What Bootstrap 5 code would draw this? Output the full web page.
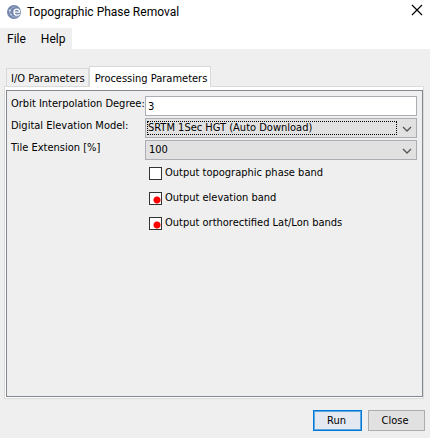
<!DOCTYPE html>
<html lang="en">
<head>
<meta charset="utf-8">
<meta name="viewport" content="width=device-width, initial-scale=1">
<title>Topographic Phase Removal</title>
<link href="https://cdn.jsdelivr.net/npm/bootstrap@5.3.0/dist/css/bootstrap.min.css" rel="stylesheet">
<style>
body{background:#efefef;color:#000;font:11px/14px "DejaVu Sans Condensed","Liberation Sans",sans-serif}
.titlebar{height:28px;padding:0 6px;background:#fff}
.titlebar h1{font:12px/16px Roboto,"Open Sans",sans-serif;padding-left:5px}
.titlebar h1,.titlebar svg{margin-top:-4px}
.win-close{width:14px;height:14px}
.menubar{height:21px;background:#fff}
.menu-items{background:#efefef;padding:0 7px;gap:15px}
.menu-items button{font:12px/20px Roboto,"Open Sans",sans-serif;color:#000}
.dialog-main{padding:17px 6px 0 4px}
.tabs{padding-left:2px}
.tabs .nav-link{font-size:11px;line-height:14px;color:#000;background:#f0f0f0;border:1px solid #d9d9d9;border-bottom:0;border-radius:0;padding:3px 3px 0 4px;height:18px;white-space:nowrap}
.tabs .nav-link.active{background:#fff;height:21px;padding:3px 3px 0 5px;margin-bottom:-1px;z-index:1;position:relative}
.pane{border:1px solid #d9dcd9;background:#fff;padding:3px 0 1px 1px}
.pane-body{border:1px solid #828790;background:#efefef;padding:5px 5px 0 4px}
.form-grid{display:grid;grid-template-columns:134px 1fr;row-gap:2px}
.form-grid label.caption{white-space:nowrap;line-height:16px}
.field{height:20px;min-height:0;border:1px solid #abadb3;border-radius:0;font-size:11px;line-height:14px;padding:2px;color:#000;background-color:#fff}
.combo{display:grid;grid-template-columns:1fr 20px;align-items:center}
.combo>*{grid-row:1}
.combo select{grid-column:1/3;background:#e1e1e1;appearance:none}
.combo .roomy{padding-left:3px}
.combo svg{grid-column:2;pointer-events:none;width:10px;height:6px;margin:2px 0 0 5px;z-index:1}
.combo .focus-mark{grid-column:1;height:14px;border:1px dotted #000;margin:0 0 0 2px;pointer-events:none;z-index:1}
.checks{padding:6px 0 0 138px;gap:11px}
.checks label{gap:3px;height:14px;white-space:nowrap}
.tick{appearance:none;width:13px;height:13px;margin:0;border:1px solid #333;background:#fff;flex:none}
.tick:checked{background:radial-gradient(circle at 7px 7px,red 3px,#fff 4px) padding-box}
.actions{padding:11px 5px 7px;gap:6px}
.action{font-size:11px;line-height:15px;height:21px;width:57px;padding:0 3px 0 0;border:1px solid #adadad;border-radius:0;background:#e1e1e1;color:#000}
.action.default{width:49px;padding:0 2px 0 0;border:1px solid #0078d7;box-shadow:inset 0 0 0 1px #5ba7e3;background:#e3e8f1}
</style>
</head>
<body>
<div class="d-flex flex-column min-vh-100">
<header>
<div class="titlebar d-flex align-items-center">
<svg width="16" height="16" viewBox="0 0 16 16" aria-hidden="true"><circle cx="8" cy="8" r="7" fill="#7487ad"/><path d="M9 3a5 5 0 1 0 3.800 8.200" fill="none" stroke="#a9b5cf" stroke-width="1"/><path d="M8.200 8.200h5.400c0-2-1-3-2.700-3S8 6.400 8 8.200s1.200 3 2.900 3c1.200 0 2-.4 2.700-1.100" fill="none" stroke="#fff" stroke-width="1.300"/><circle cx="3.800" cy="6.500" r="1" fill="#dce2ee"/><circle cx="5" cy="10.500" r=".8" fill="#dce2ee"/></svg>
<h1 class="mb-0">Topographic Phase Removal</h1>
<button class="win-close btn p-0 border-0 ms-auto d-flex" aria-label="Close window"><svg width="14" height="14" viewBox="0 0 14 14"><path d="M2 2l10 10M12 2L2 12" stroke="#000" stroke-width="1.200"/></svg></button>
</div>
<nav class="menubar d-flex"><div class="menu-items d-flex"><button class="btn p-0 border-0">File</button><button class="btn p-0 border-0">Help</button></div></nav>
</header>
<main class="dialog-main flex-grow-1 d-flex flex-column">
<div class="tabs nav d-flex flex-nowrap align-items-end" role="tablist">
<button class="nav-link" role="tab" aria-selected="false">I/O Parameters</button>
<button class="nav-link active" role="tab" aria-selected="true">Processing Parameters</button>
</div>
<div class="pane flex-grow-1 d-flex"><form class="pane-body flex-grow-1">
<div class="form-grid">
<label class="caption" for="degree">Orbit Interpolation Degree:</label>
<input id="degree" class="field form-control" type="text" value="3">
<label class="caption" for="dem">Digital Elevation Model:</label>
<div class="combo"><select id="dem" class="field w-100"><option>SRTM 1Sec HGT (Auto Download)</option></select><span class="focus-mark"></span><svg viewBox="0 0 10 6"><path d="M1 1l4 4 4-4" fill="none" stroke="#555" stroke-width="1.300"/></svg></div>
<label class="caption" for="tile">Tile Extension [%]</label>
<div class="combo"><select id="tile" class="field roomy w-100"><option>100</option></select><svg viewBox="0 0 10 6"><path d="M1 1l4 4 4-4" fill="none" stroke="#555" stroke-width="1.300"/></svg></div>
</div>
<div class="checks d-flex flex-column align-items-start">
<label class="d-flex align-items-center"><input class="tick" type="checkbox">Output topographic phase band</label>
<label class="d-flex align-items-center"><input class="tick" type="checkbox" checked>Output elevation band</label>
<label class="d-flex align-items-center"><input class="tick" type="checkbox" checked>Output orthorectified Lat/Lon bands</label>
</div>
</form></div>
</main>
<footer class="actions d-flex justify-content-end"><button class="action default btn">Run</button><button class="action btn">Close</button></footer>
</div>
<script src="https://cdn.jsdelivr.net/npm/bootstrap@5.3.0/dist/js/bootstrap.bundle.min.js"></script>
</body>
</html>
